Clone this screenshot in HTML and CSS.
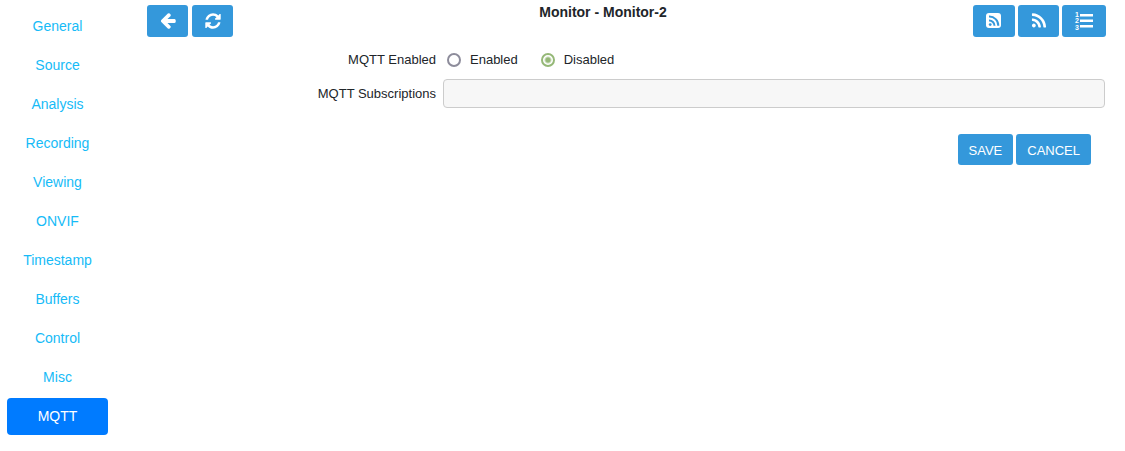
FILE: index.html
```html
<!DOCTYPE html>
<html lang="en">
<head>
<meta charset="utf-8">
<title>Monitor - Monitor-2</title>
<link rel="stylesheet" href="styles.css">
</head>
<body>
<nav class="tabs" aria-label="Monitor settings">
  <a class="tab" href="#general">General</a>
  <a class="tab" href="#source">Source</a>
  <a class="tab" href="#analysis">Analysis</a>
  <a class="tab" href="#recording">Recording</a>
  <a class="tab" href="#viewing">Viewing</a>
  <a class="tab" href="#onvif">ONVIF</a>
  <a class="tab" href="#timestamp">Timestamp</a>
  <a class="tab" href="#buffers">Buffers</a>
  <a class="tab" href="#control">Control</a>
  <a class="tab" href="#misc">Misc</a>
  <a class="tab tab-active" href="#mqtt" aria-current="page">MQTT</a>
</nav>
<main class="main">
  <header class="toolbar">
    <div class="tools">
      <button class="btn tool" type="button" aria-label="Back">
        <svg class="icon" viewBox="0 0 1792 1792"><path d="M1664 896v128q0 53-32.500 90.500t-84.500 37.500h-704l293 294q38 36 38 90t-38 90l-75 76q-37 37-90 37-52 0-91-37l-651-652q-37-37-37-90 0-52 37-91l651-650q38-38 91-38 52 0 90 38l75 74q38 38 38 91t-38 91l-293 293h704q52 0 84.500 37.500t32.500 90.500z" transform="translate(0 -64)"/></svg>
      </button>
      <button class="btn tool" type="button" aria-label="Refresh">
        <svg class="icon" viewBox="0 0 1792 1792"><path d="M1639 1056q0 5-1 7-64 268-268 434.500t-478 166.500q-146 0-282.500-55t-243.500-157l-129 129q-19 19-45 19t-45-19-19-45v-448q0-26 19-45t45-19h448q26 0 45 19t19 45-19 45l-137 137q71 66 161 102t187 36q134 0 250-65t186-179q11-17 53-117 8-23 30-23h192q13 0 22.500 9.500t9.500 22.500zm25-800v448q0 26-19 45t-45 19h-448q-26 0-45-19t-19-45 19-45l138-138q-148-137-349-137-134 0-250 65t-186 179q-11 17-53 117-8 23-30 23h-199q-13 0-22.500-9.500t-9.500-22.500v-7q65-268 270-434.500t480-166.500q146 0 284 55.500t245 156.500l130-129q19-19 45-19t45 19 19 45z"/></svg>
      </button>
    </div>
    <h1 class="title">Monitor - Monitor-2</h1>
    <div class="tools tools-right">
      <button class="btn tool tool-probe" type="button" aria-label="Probe">
        <svg class="icon" viewBox="0 0 18 18"><rect x="1" y="1" width="15" height="15" rx="3"/><g class="cut"><path d="M4 4.500a9 9 0 0 1 9.300 9.300M4 8.400a5.300 5.300 0 0 1 5.500 5.400"/></g><circle class="dot" cx="5.200" cy="12.600" r="1.400"/></svg>
      </button>
      <button class="btn tool" type="button" aria-label="ONVIF probe">
        <svg class="icon" viewBox="0 0 1792 1792"><path d="M576 1344q0 80-56 136t-136 56-136-56-56-136 56-136 136-56 136 56 56 136zm512 123q2 28-17 48-18 21-47 21h-135q-25 0-43-16.500t-20-41.500q-22-229-184.500-391.500t-391.500-184.500q-25-2-41.500-20t-16.500-43v-135q0-29 21-47 17-17 43-17h5q160 13 306 80.500t259 181.500q114 113 181.500 259t80.500 306zm512 2q2 27-18 47-18 20-46 20h-143q-26 0-44.500-17.500t-19.500-42.500q-12-215-101-408.500t-231.500-336-336-231.500-408.500-102q-25-1-42.500-19.500t-17.500-43.500v-143q0-28 20-46 18-18 44-18h3q262 13 501.500 120t425.500 294q187 186 294 425.500t120 501.500z"/></svg>
      </button>
      <button class="btn tool tool-presets" type="button" aria-label="Presets">
        <svg class="icon icon-list" viewBox="0 0 20 20"><path d="M6 3h13v2.400H6zM6 8.500h13v2.400H6zM6 14h13v2.400H6z"/><g class="digits"><text x="1" y="6">1</text><text x="1" y="12">2</text><text x="1" y="19">3</text></g></svg>
      </button>
    </div>
  </header>
  <form class="form">
    <div class="row" role="radiogroup" aria-labelledby="enabled-label">
      <span class="label" id="enabled-label">MQTT Enabled</span>
      <div class="choices">
        <label class="choice"><input class="radio" type="radio" name="mqtt" value="1">Enabled</label>
        <label class="choice"><input class="radio" type="radio" name="mqtt" value="0" checked>Disabled</label>
      </div>
    </div>
    <div class="row">
      <label class="label" for="subs">MQTT Subscriptions</label>
      <input class="field" id="subs" type="text">
    </div>
    <div class="actions">
      <button class="btn action" type="submit">SAVE</button>
      <button class="btn action" type="button">CANCEL</button>
    </div>
  </form>
</main>
</body>
</html>
```

FILE: styles.css
```css
* { box-sizing: border-box; }
body {
  margin: 0;
  display: flex;
  background: #fff;
  color: #212529;
  font: 13px/20px "Liberation Sans", Arial, sans-serif;
}
.tabs {
  flex: none;
  width: 108px;
  padding: 8px 0 8px 7px;
  display: flex;
  flex-direction: column;
  gap: 2px;
}
.tab {
  padding: 8px;
  border-radius: 4px;
  color: #16bbf7;
  font-size: 14px;
  line-height: 21px;
  text-align: center;
  text-decoration: none;
}
.tab-active { background: #007bff; color: #fff; }
.main { flex: 1; min-width: 0; padding: 5px 19px 0 39px; }
.toolbar { display: flex; }
.tools { display: flex; gap: 4px; }
.title {
  flex: 1;
  margin: 0;
  font-size: 14px;
  line-height: 15px;
  text-align: center;
}
.btn {
  border: 0;
  border-radius: 3px;
  background: #3498db;
  color: #fff;
  font: inherit;
}
.tool {
  width: 41px;
  height: 32px;
  padding: 0;
  display: flex;
  align-items: center;
  justify-content: center;
}
.tools-right { gap: 3px; }
.tool-probe { width: 42px; }
.tool-presets { width: 44px; }
.icon { width: 18px; height: 18px; fill: #fff; }
.icon-list { width: 20px; height: 20px; }
.cut { fill: none; stroke: #3498db; stroke-width: 2; }
.dot { fill: #3498db; }
.digits { font: bold 7px "Liberation Sans", Arial, sans-serif; }
.form {
  padding: 13px 1px 0 0;
  display: flex;
  flex-direction: column;
  gap: 9px;
}
.row {
  display: grid;
  grid-template-columns: 289px 1fr;
  align-items: center;
  gap: 7px;
}
.label { text-align: right; }
.choices { display: flex; gap: 23px; padding-left: 4px; }
.choice { display: flex; align-items: center; gap: 9px; }
.radio {
  appearance: none;
  width: 14px;
  height: 14px;
  margin: 0;
  border: 2px solid #8d8c9b;
  border-radius: 50%;
}
.radio:checked {
  border-color: #95b877;
  background: radial-gradient(circle, #95b877 2px, transparent 4px);
}
.field {
  width: 100%;
  height: 29px;
  padding: 4px 8px;
  border: 1px solid #ccc;
  border-radius: 4px;
  background: #f7f7f7;
  font: inherit;
}
.actions {
  display: flex;
  justify-content: flex-end;
  gap: 3px;
  padding: 17px 14px 0 0;
}
.action { height: 31px; padding: 2px 11px 0; }
```
